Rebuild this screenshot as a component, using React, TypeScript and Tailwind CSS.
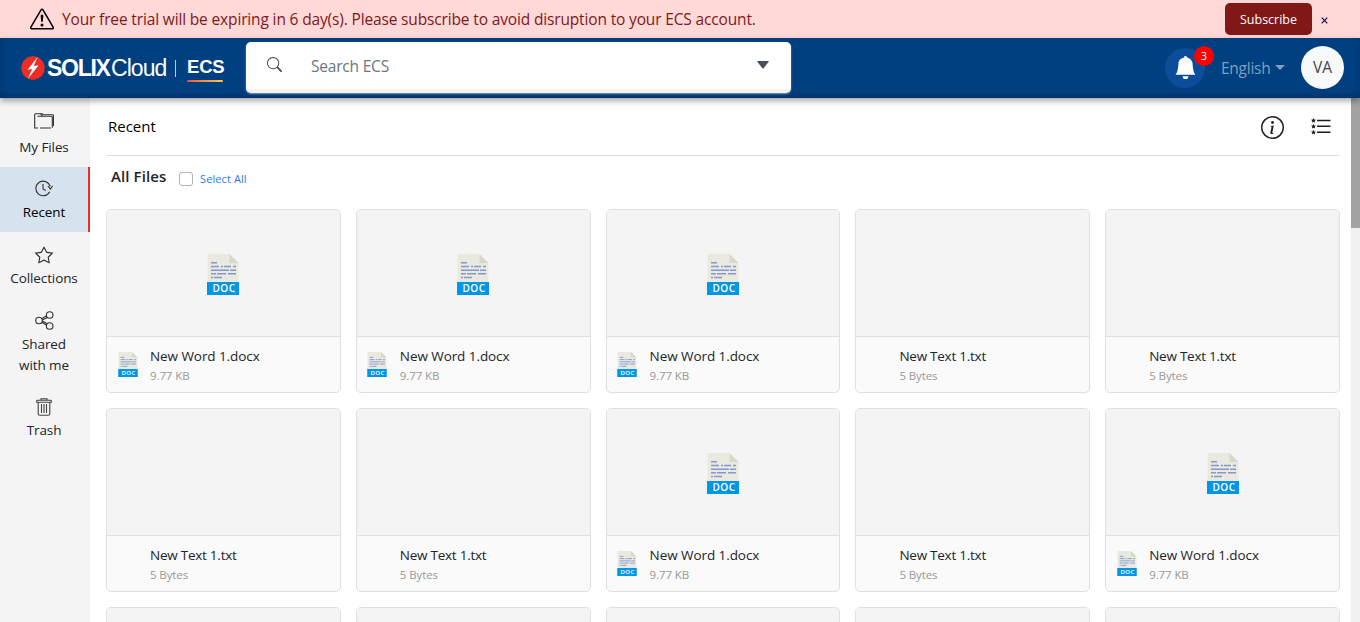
import React from "react";
import { BsBellFill, BsExclamationTriangle, BsInfoCircle, BsSearch, BsStar } from "react-icons/bs";

type FileKind = "doc" | "txt" | "pending";

const files: FileKind[] = [
  "doc", "doc", "doc", "txt", "txt",
  "txt", "txt", "doc", "txt", "doc",
  "pending", "pending", "pending", "pending", "pending",
];

function DocIcon({ className }: { className: string }) {
  return (
    <svg viewBox="0 0 32 41" className={className}>
      <path d="M.500 0H22.500L31.500 9V29H.500Z" fill="#e9e9e0" />
      <path d="M22.500 0L31.500 9H22.500Z" fill="#d9d7ca" />
      <g stroke="#8697cb" strokeWidth="1.500" fill="none">
        <path d="M4 8.800h6" />
        <path d="M4 12.500h8M14 12.500h2M17 12.500h7M26 12.500h3" />
        <path d="M4 16.200h18M23 16.200h6" />
        <path d="M4 19.800h5M10 19.800h9M21 19.800h8" />
        <path d="M4 23.500h2M7 23.500h8" />
      </g>
      <path d="M0 28H32V41H0Z" fill="#0096e6" />
      <text x="17" y="38.300" textAnchor="middle" fill="#fff" fontSize="10" fontWeight="600" letterSpacing="0.500" fontFamily="Open Sans, sans-serif">
        DOC
      </text>
    </svg>
  );
}

function FolderIcon() {
  return (
    <svg viewBox="0 0 20 16" className="h-4 w-5" fill="none" stroke="#333" strokeWidth="1.100">
      <path d="M4 15H.700V1.700Q.700.700 1.700.700H6.500L8.500 3.200M6 15H17M3.500 3.300H17.300Q18.300 3.300 18.300 4.300V14.800" />
      <path d="M6.500.700H8L9.800 1.800H18.500Q19.500 1.800 19.500 2.800V13" />
    </svg>
  );
}

function RecentIcon() {
  return (
    <svg viewBox="0 0 18 17" className="h-[17px] w-[18px]" fill="none" stroke="#333" strokeWidth="1.100">
      <path d="M14.700 11.700A7.300 7.300 0 1 1 15.200 6.500" />
      <path d="M8 4V9L10.800 10.600M12.900 6L15.500 9L17.600 5.700" />
    </svg>
  );
}

function ShareIcon() {
  return (
    <svg viewBox="0 0 19 19" className="size-[19px]" fill="none" stroke="#333" strokeWidth="1.100">
      <circle cx="4" cy="9.500" r="3.300" />
      <circle cx="14.700" cy="4" r="3.300" />
      <circle cx="14.700" cy="15" r="3.300" />
      <path d="M6.800 7.700L11.600 4.800M6.800 11.300L11.600 14.200M7.300 9L12.300 6.500M7.300 10L12.300 12.700" />
    </svg>
  );
}

function TrashIcon() {
  return (
    <svg viewBox="0 0 16 18" className="h-[18px] w-4" fill="none" stroke="#444" strokeWidth="1.100">
      <path d="M.700 4.200V3Q.700 2.300 1.500 2.300H14.500Q15.300 2.300 15.300 3V4.200ZM5 2.300V.700H11V2.300M2.200 4.500V15.700Q2.200 17.300 3.800 17.300H12.200Q13.800 17.300 13.800 15.700V4.500" />
      <path d="M5.500 6V15M8 6V15M10.500 6V15" />
    </svg>
  );
}

function StarListIcon() {
  const star = "M2.500 0L3.200 1.600L5 1.700L3.700 2.900L4.100 4.700L2.500 3.800L.900 4.700L1.300 2.900L0 1.700L1.800 1.600Z";
  return (
    <svg viewBox="0 0 20 17" className="h-[17px] w-5" fill="#1c1c1c">
      <path d={star} />
      <path d={star} transform="translate(0 5.900)" />
      <path d={star} transform="translate(0 11.800)" />
      <path d="M6 2.500H19.500M6 8.300H19.500M6 14.200H19.500" stroke="#1c1c1c" strokeWidth="1.400" />
    </svg>
  );
}

function Logo() {
  return (
    <div className="ml-[21px] flex w-[225px] shrink-0 items-center font-['Liberation_Sans',sans-serif] text-white">
      <svg viewBox="0 0 24 24" className="size-6 shrink-0">
        <circle cx="12" cy="12" r="11.700" fill="#ee2e24" />
        <path d="M16.800.800L6.600 13.700L11.200 13L6.700 23L17.600 9.200L12.700 10Z" fill="#fff" />
      </svg>
      <span className="ml-[2px] w-[64px] text-[23px] leading-6 font-bold tracking-[-1.3px]">SOLIX</span>
      <span className="w-[56px] text-[23px] leading-6 tracking-[-0.95px]">Cloud</span>
      <span className="ml-[8px] h-[17px] w-px bg-[#b9c9dc]" />
      <span className="ml-[11px] flex flex-col pt-px">
        <span className="h-[24px] w-[37px] text-[18.5px] leading-[22px] font-bold tracking-[-0.2px]">ECS</span>
        <span className="h-[2px] w-9 rounded-full bg-linear-to-r from-[#f0503c] to-[#f8c850]" />
      </span>
    </div>
  );
}

function Banner() {
  return (
    <div className="flex h-[38px] shrink-0 items-center bg-[#ffd8d8]">
      <BsExclamationTriangle className="ml-[30px] size-6 text-black" />
      <span className="mt-[2px] ml-2 text-[15.5px] tracking-[-0.15px] whitespace-nowrap text-[#801818]">
        Your free trial will be expiring in 6 day(s). Please subscribe to avoid disruption to your ECS account.
      </span>
      <button className="ml-auto h-8 w-[87px] rounded-[5px] bg-[#801818] pt-[2px] text-[12.5px] text-white">Subscribe</button>
      <svg viewBox="0 0 8 8" className="mt-[3px] mr-[32px] ml-[9px] size-[7px]" stroke="#00104d" strokeWidth="1.300">
        <path d="M.800.800L7.200 7.200M7.200.800L.800 7.200" />
      </svg>
    </div>
  );
}

function Header() {
  return (
    <header className="relative z-10 flex h-[60px] shrink-0 items-center bg-[#004080] shadow-[0_3px_6px_rgba(0,0,0,0.35),inset_0_-3px_6px_rgba(0,0,40,0.25)]">
      <Logo />
      <div className="mb-px flex h-[51px] w-[544.5px] items-center rounded-[5px] border-b-4 border-[#f3f3f3] bg-white shadow-[0_1px_2px_rgba(255,255,255,0.5)]">
        <BsSearch className="mb-[2px] ml-[21px] size-[15px] text-[#495057]" />
        <span className="mt-[3px] ml-[29px] text-[15.5px] tracking-[-0.2px] text-[#6c757d]">Search ECS</span>
        <svg viewBox="0 0 12 8" className="mr-[22px] mb-[2px] ml-auto h-2 w-3" fill="#495057">
          <path d="M.800 0H11.200Q12.300 0 11.500 1L6.800 7Q6 8 5.200 7L.500 1Q-.300 0 .800 0Z" />
        </svg>
      </div>
      <div className="relative ml-auto flex size-10 items-center justify-center rounded-full bg-[#0c4d99]">
        <BsBellFill className="mb-px size-[23px] text-white" />
        <span className="absolute -top-[2px] -right-[9px] flex size-5 items-center justify-center rounded-full bg-[#ff0000] pb-px text-[11px] leading-none text-white">3</span>
      </div>
      <span className="mt-[2px] ml-4 w-[51px] text-[15.5px] tracking-[-0.25px] text-[#7f9fc0]">English</span>
      <svg viewBox="0 0 10 5" className="mb-[2px] ml-[3px] h-[5px] w-[10px]" fill="#7f9fc0">
        <path d="M0 0H10L5 5Z" />
      </svg>
      <div className="mr-4 mb-px ml-4 flex size-[43px] items-center justify-center rounded-full bg-[#f8f9fa] pt-px text-[15.5px] text-[#444]">VA</div>
    </header>
  );
}

function NavItem({ icon, label, className, active = false }: { icon: React.ReactNode; label: React.ReactNode; className: string; active?: boolean }) {
  return (
    <div className={`flex flex-col items-center border-r-2 text-center text-[13.5px] leading-[21px] tracking-[-0.1px] ${active ? "border-[#f02b2b] bg-[#d6e2ee] text-black" : "border-transparent text-[#212529]"} ${className}`}>
      <div className="flex h-[20px] items-center">{icon}</div>
      <div className="mt-[4px]">{label}</div>
    </div>
  );
}

function Sidebar() {
  return (
    <nav className="w-[90px] shrink-0 bg-[#f4f4f4]">
      <NavItem icon={<FolderIcon />} label={<div className="pt-[2px]">My Files</div>} className="h-[69px] pt-[13px]" />
      <NavItem icon={<RecentIcon />} label="Recent" active className="h-[65px] pt-[11px]" />
      <NavItem icon={<BsStar className="mt-[2px] size-[18px] text-[#333]" />} label="Collections" className="h-[66px] pt-3" />
      <NavItem icon={<ShareIcon />} label={<>Shared<br />with me</>} className="h-[87px] pt-3" />
      <NavItem icon={<span className="pt-[2px]"><TrashIcon /></span>} label="Trash" className="h-[66px] pt-[11px]" />
    </nav>
  );
}

function FileCard({ kind }: { kind: FileKind }) {
  const doc = kind === "doc";
  return (
    <div className="flex h-[184px] flex-col overflow-hidden rounded-[5px] border border-[#dee0e2] bg-[#fafafa]">
      <div className="flex h-[127px] items-center justify-center border-b border-[#dee0e2] bg-[#f4f4f4] pt-[3px]">
        {doc && <DocIcon className="h-[41px] w-8" />}
      </div>
      {kind !== "pending" && (
        <div className="flex pl-[10px]">
          <div className="w-[33px] pt-[15px]">{doc && <DocIcon className="ml-[0.5px] h-[25px] w-[20px]" />}</div>
          <div className="pt-[9px]">
            <div className={`text-[13.5px] leading-5 text-[#212529] ${doc ? "tracking-[-0.07px]" : "tracking-[-0.25px]"}`}>{doc ? "New Word 1.docx" : "New Text 1.txt"}</div>
            <div className="text-[11.5px] leading-5 tracking-[-0.1px] text-[#999]">{doc ? "9.77 KB" : "5 Bytes"}</div>
          </div>
        </div>
      )}
    </div>
  );
}

export default function App() {
  return (
    <div className="flex h-[622px] w-full flex-col overflow-hidden bg-white font-['Open_Sans',sans-serif]">
      <Banner />
      <Header />
      <div className="flex min-h-0 flex-1">
        <Sidebar />
        <main className="min-w-0 flex-1 overflow-hidden pr-[11px] pl-4">
          <div className="flex h-[58px] items-center border-b border-[#e0e0e0] pr-[9px] pl-[2px]">
            <h1 className="text-[15px] text-black">Recent</h1>
            <BsInfoCircle className="mt-[2px] ml-auto size-[23px] text-[#222]" />
            <span className="ml-[27px]"><StarListIcon /></span>
          </div>
          <div className="flex h-[53px] items-start pl-[5px]">
            <h2 className="mt-[8px] w-[68px] text-[15px] leading-6 font-semibold tracking-[0.1px] whitespace-nowrap text-[#212529]">All Files</h2>
            <span className="mt-4 size-[14px] rounded-[3px] border border-[#adb5bd] bg-white" />
            <span className="mt-[13px] ml-[7px] text-[11px] leading-5 tracking-[0.1px] text-[#2a7cf7]">Select All</span>
          </div>
          <div className="grid grid-cols-5 gap-[15px]">
            {files.map((kind, i) => <FileCard key={i} kind={kind} />)}
          </div>
        </main>
        <div className="w-[9px] shrink-0 bg-[#f1f1f1]">
          <div className="h-[130px] bg-[#a3a3a3]" />
        </div>
      </div>
    </div>
  );
}
